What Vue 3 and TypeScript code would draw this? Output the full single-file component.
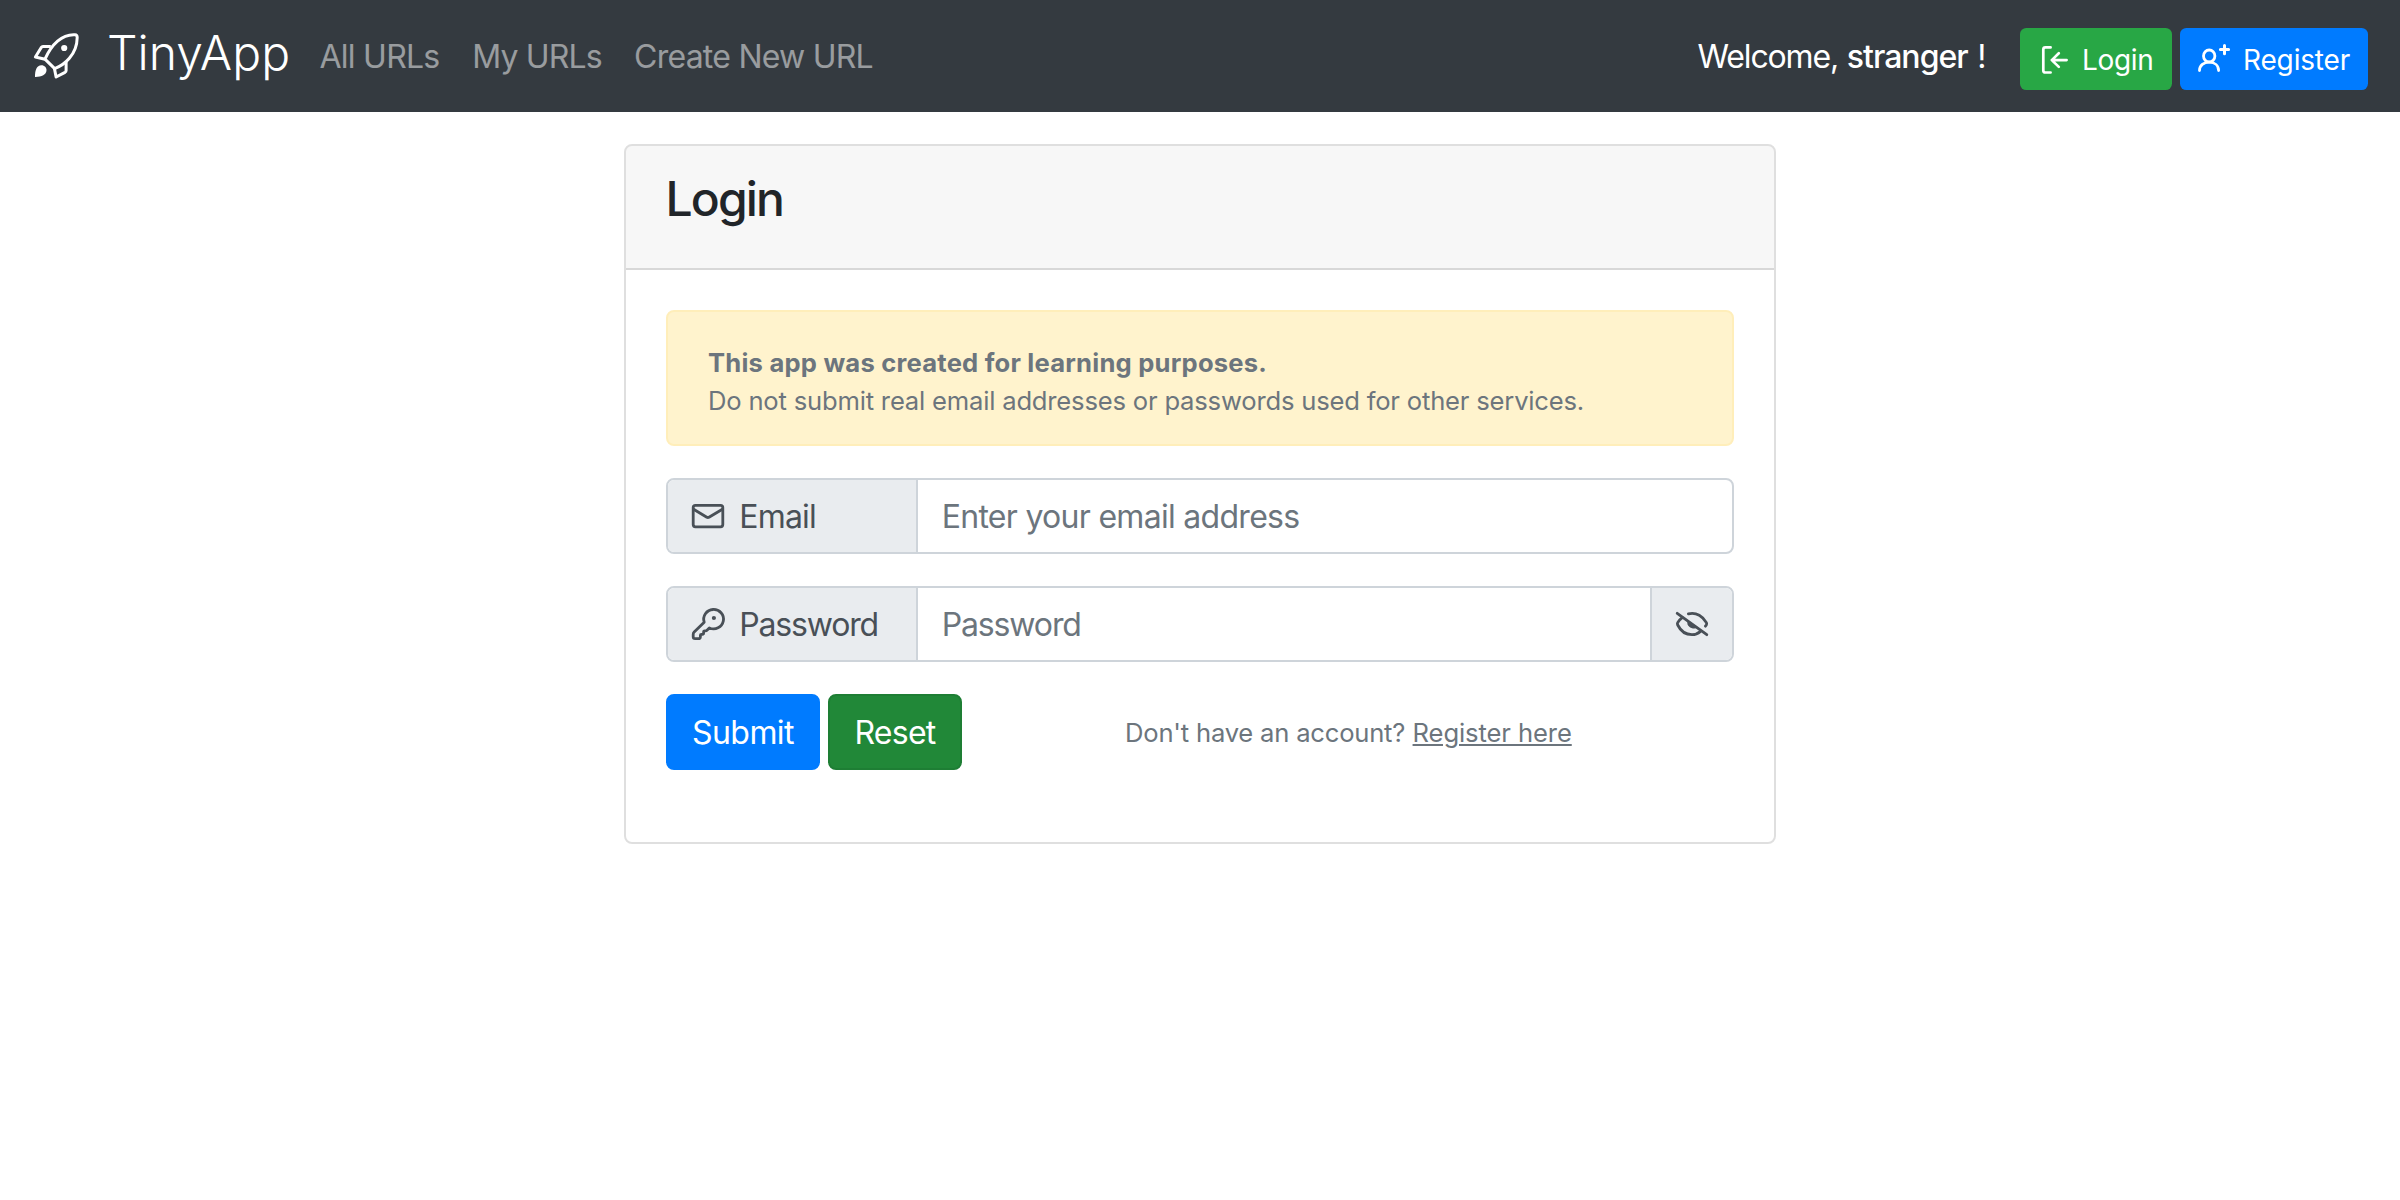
<script setup lang="ts">
import { ref } from 'vue'

const email = ref('')
const password = ref('')
const showPassword = ref(false)

function reset(): void {
  email.value = ''
  password.value = ''
}
</script>

<template>
  <div class="page">
    <nav class="navbar">
      <a class="brand">
        <svg class="rocket" viewBox="32 32 48 48" fill="none" stroke="currentColor" stroke-width="3" stroke-linejoin="round">
          <path d="M45 59.2L54.7 68.6C64 65.2 77 55 77.2 37.5C77.2 35.7 76.5 34.9 75 34.8C62 34 51.5 44.5 45 59.2Z" />
          <path d="M50.8 46.6H43C42 46.6 41.6 47 41.1 47.7L35.4 57L45 59.2" />
          <path d="M54.4 68.4L56.1 77L65 72.3C65.8 71.8 66.1 71.4 66.1 70.5V61.5" />
          <circle cx="64.2" cy="48" r="3.1" fill="currentColor" stroke="none" />
          <path d="M35 77C34.8 70.5 36.6 65.2 41.4 65.2C44.6 65.2 46.6 67.6 46.5 70.3C46.3 74.8 41.5 77.1 35 77Z" fill="currentColor" stroke="none" />
        </svg>
        <span>TinyApp</span>
      </a>
      <a class="link all">All URLs</a>
      <a class="link my">My URLs</a>
      <a class="link create">Create New URL</a>
      <div class="session">
        <span class="welcome">Welcome,</span>
        <strong class="user">stranger</strong>
        <span class="bang">!</span>
        <button class="btn-sm green" type="button">
          <svg viewBox="2040 43 30 34" fill="none" stroke="currentColor" stroke-width="2.7" stroke-linecap="round" stroke-linejoin="round">
            <path d="M2050.6 47.4H2045.4Q2043.3 47.4 2043.3 49.5V70.4Q2043.3 72.5 2045.4 72.5H2050.6" />
            <path d="M2066.6 60.1H2051.8M2058.8 53.2L2051.8 60.1L2058.8 66.9" />
          </svg>
          <span class="login-text">Login</span>
        </button>
        <button class="btn-sm blue" type="button">
          <svg viewBox="2196 43 36 34" fill="none" stroke="currentColor" stroke-width="2.8" stroke-linecap="round">
            <ellipse cx="2209.2" cy="56" rx="5.7" ry="6" />
            <path d="M2199.5 70.6C2199.5 65.4 2203.8 62.2 2209.2 62.2S2218.6 65.4 2218.6 70.6" />
            <path d="M2220.4 49.6H2228.6M2224.5 45.5V53.7" stroke-width="3" />
          </svg>
          <span class="register-text">Register</span>
        </button>
      </div>
    </nav>

    <main class="card">
      <header class="card-header"><h2>Login</h2></header>
      <form class="card-body" @submit.prevent>
        <div class="alert">
          <strong>This app was created for learning purposes.</strong>
          <span>Do not submit real email addresses or passwords used for other services.</span>
        </div>

        <div class="group">
          <label class="label" for="email">
            <svg viewBox="690 500 36 32" width="36" height="32" fill="none" stroke="currentColor" stroke-width="2.8" stroke-linecap="round" stroke-linejoin="round">
              <rect x="693.2" y="505.3" width="29.6" height="21.5" rx="2.2" />
              <path d="M693.6 509.2L706.8 517.2Q707.9 517.8 709 517.2L722.4 509.2" />
            </svg>
            <span class="email-text">Email</span>
          </label>
          <input id="email" v-model="email" class="field email-field" type="text" placeholder="Enter your email address">
        </div>

        <div class="group">
          <label class="label" for="password">
            <svg viewBox="690 606 36 36" width="36" height="36" fill="none" stroke="currentColor" stroke-width="2.8" stroke-linecap="round" stroke-linejoin="round">
              <path d="M704.2 622.2L694.2 632.1Q693.2 633.1 693.2 634.4V636.8Q693.2 638.7 695.1 638.7H698.2Q700.4 638.7 700.4 636.7V635.2Q700.4 634.3 701.4 634.3H702.4Q703.6 634.3 703.6 633.1V631.8Q703.6 630.8 704.7 630.8H705.6Q706.4 630.8 707 630.2L709.3 627.9A9.9 9.7 0 1 0 704.2 622.2Z" />
              <circle cx="713.9" cy="618" r="2.1" fill="currentColor" stroke="none" />
            </svg>
            <span class="password-text">Password</span>
          </label>
          <input id="password" v-model="password" class="field password-field" :type="showPassword ? 'text' : 'password'" placeholder="Password">
          <button class="toggle" type="button" aria-label="Show password" @click="showPassword = !showPassword">
            <svg viewBox="1674 608 36 32" width="36" height="32" fill="none" stroke="currentColor" stroke-width="2.8" stroke-linecap="round">
              <path d="M1677.2 613.3L1706.8 634.7" />
              <path d="M1682.2 617.6C1680.1 619.2 1678.6 621 1677.7 622.6Q1677.1 623.8 1677.7 625C1680.3 630.2 1685.5 634.7 1692 634.7C1695.4 634.7 1698.2 633.4 1700.2 631.6" />
              <path d="M1688.4 613.9C1696.5 611.6 1703.2 617 1706.4 622.6Q1707 623.8 1706.3 625L1705.4 626.2" />
              <path d="M1687.4 621.2L1697 628.1C1692.2 629.8 1686.4 626.5 1687.4 621.2Z" fill="currentColor" stroke="none" />
            </svg>
          </button>
        </div>

        <div class="actions">
          <button class="btn submit blue" type="submit">Submit</button>
          <button class="btn reset" type="button" @click="reset">Reset</button>
          <p class="hint"><span>Don't have an account?</span><a>Register here</a></p>
        </div>
      </form>
    </main>
  </div>
</template>

<style>
body {
  background: #fff;
}
</style>

<style scoped>
.page,
.page * {
  box-sizing: border-box;
}
.page {
  width: 2400px;
  height: 1200px;
  font-family: Inter, "Liberation Sans", sans-serif;
  font-size: 32px;
  font-weight: 400;
  line-height: 48px;
  color: #212529;
  white-space: nowrap;
}
button,
input {
  font-family: inherit;
  font-size: inherit;
  font-weight: inherit;
  line-height: inherit;
  margin: 0;
}
svg {
  display: block;
  flex: none;
}
.navbar {
  display: flex;
  align-items: center;
  height: 112px;
  padding: 0 32px;
  background: #343a40;
  color: #fff;
}
.brand {
  display: flex;
  align-items: center;
  font-size: 48px;
  font-weight: 300;
  letter-spacing: 0.05px;
}
.brand span {
  margin: 0 0 6px 27px;
}
.rocket {
  width: 48px;
  height: 48px;
}
.link {
  padding-top: 2px;
  color: rgba(255, 255, 255, 0.5);
}
.all {
  margin-left: 29.4px;
  letter-spacing: -0.75px;
}
.my {
  margin-left: 32.8px;
  letter-spacing: -0.86px;
}
.create {
  margin-left: 32.4px;
  letter-spacing: -0.76px;
}
.session {
  display: flex;
  align-items: center;
  margin-left: auto;
}
.welcome {
  padding-top: 2px;
  letter-spacing: -1.15px;
}
.user {
  margin-left: 8.7px;
  padding-top: 2px;
  font-weight: 500;
  letter-spacing: -0.98px;
}
.bang {
  margin-left: 9.6px;
  margin-right: 33.5px;
  padding-top: 2px;
}
.btn-sm {
  display: flex;
  align-items: center;
  height: 62px;
  margin-top: 6px;
  padding: 0;
  border: 0;
  border-radius: 6.4px;
  color: #fff;
  font-size: 28px;
  line-height: 42px;
}
.btn-sm span {
  padding-top: 2px;
}
.btn-sm.green {
  width: 152px;
  padding-left: 20px;
  background: #28a745;
}
.btn-sm.green svg {
  width: 30px;
  height: 34px;
  margin-top: 2px;
}
.btn-sm.blue {
  width: 188px;
  margin-left: 8px;
  padding-left: 16px;
}
.btn-sm.blue svg {
  width: 36px;
  height: 34px;
  margin-top: 2px;
}
.login-text {
  margin-left: 12px;
  letter-spacing: -0.319px;
}
.register-text {
  margin-left: 11px;
  letter-spacing: -0.16px;
}
.blue {
  background: #007bff;
}
.card {
  width: 1152px;
  height: 700px;
  margin: 32px auto 0;
  border: 2px solid rgba(0, 0, 0, 0.125);
  border-radius: 8px;
}
.card-header {
  height: 124px;
  padding: 24px 40px;
  border-bottom: 2px solid rgba(0, 0, 0, 0.125);
  border-radius: 6px 6px 0 0;
  background: rgba(0, 0, 0, 0.03);
}
h2 {
  margin: 0 0 0 -0.5px;
  font-size: 48px;
  font-weight: 500;
  line-height: 58px;
  letter-spacing: -1.85px;
}
.card-body {
  margin: 0;
  padding: 40px;
}
.alert {
  display: flex;
  flex-direction: column;
  height: 136px;
  margin-bottom: 32px;
  padding: 32px 40px;
  border: 2px solid #ffeeba;
  border-radius: 8px;
  background: #fff3cd;
  color: #6c757d;
  font-size: 25.6px;
  line-height: 38px;
}
.alert strong {
  font-weight: 700;
  letter-spacing: 0.212px;
}
.alert span {
  letter-spacing: -0.192px;
}
.group {
  display: flex;
  height: 76px;
  margin-bottom: 32px;
  border: 2px solid #ced4da;
  border-radius: 8px;
  background: #fff;
  overflow: hidden;
}
.label {
  display: flex;
  align-items: center;
  width: 250px;
  padding-left: 22px;
  border-right: 2px solid #ced4da;
  background: #e9ecef;
  color: #495057;
}
.label span {
  margin-left: 13.3px;
  padding-top: 2px;
}
.email-text {
  letter-spacing: -0.821px;
}
.password-text {
  letter-spacing: -1.186px;
}
.field {
  flex: 1;
  min-width: 0;
  padding: 2px 24px 0 23.7px;
  border: 0;
  outline: 0;
  background: transparent;
  color: #495057;
}
.field::placeholder {
  color: #6c757d;
  opacity: 1;
}
.email-field {
  letter-spacing: -0.708px;
}
.password-field {
  letter-spacing: -1.129px;
}
.toggle {
  display: flex;
  align-items: center;
  justify-content: center;
  width: 82px;
  padding: 0;
  border: 0;
  border-left: 2px solid #ced4da;
  background: #e9ecef;
  color: #495057;
}
.actions {
  display: flex;
  align-items: center;
}
.btn {
  height: 76px;
  padding: 2px 0 0;
  border-radius: 8px;
  color: #fff;
  text-align: center;
}
.submit {
  width: 154px;
  border: 2px solid #007bff;
  letter-spacing: -0.566px;
}
.reset {
  width: 134px;
  margin-left: 8px;
  border: 2px solid #1e7e34;
  background: #218838;
  letter-spacing: -0.757px;
}
.hint {
  display: flex;
  margin: 0 0 0 163px;
  padding-top: 2px;
  color: #6c757d;
  font-size: 25.6px;
  line-height: 38px;
}
.hint span {
  letter-spacing: -0.205px;
}
.hint a {
  margin-left: 7.4px;
  text-decoration: underline;
  text-decoration-thickness: 2px;
  text-underline-offset: 2px;
  letter-spacing: -0.1px;
}
</style>
